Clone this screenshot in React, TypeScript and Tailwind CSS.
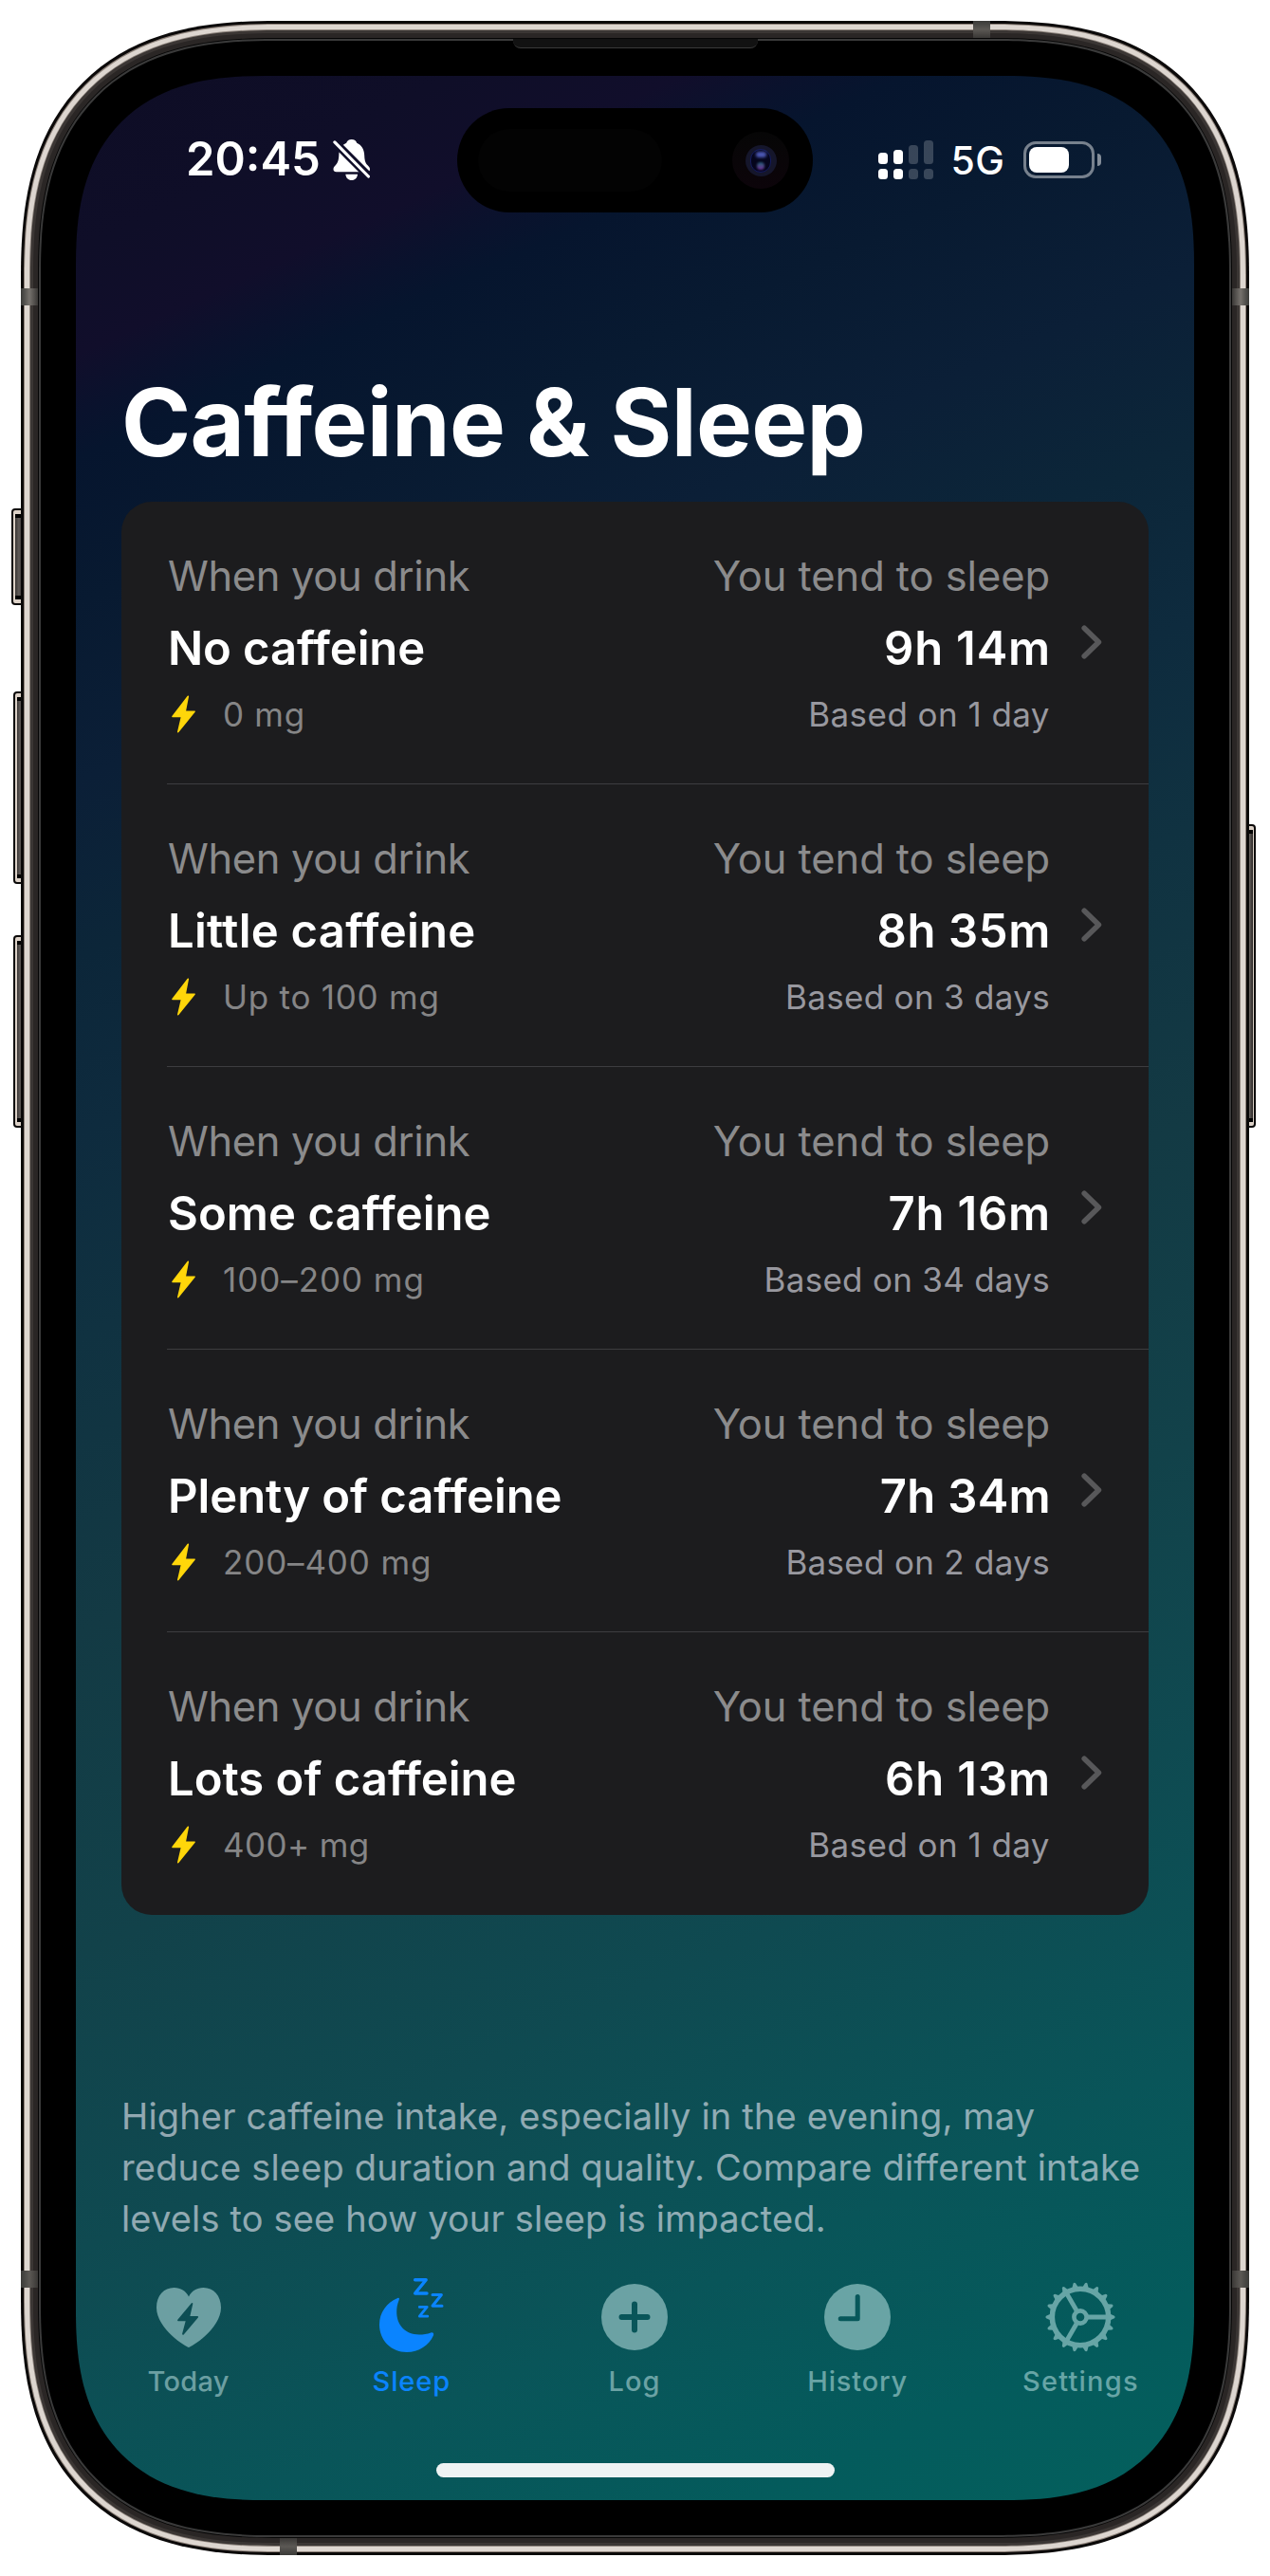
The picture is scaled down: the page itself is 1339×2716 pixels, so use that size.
import type { ReactNode } from "react";

const frameLayers = [
  "rounded-[270px] bg-[#0b0909] p-[3px]",
  "rounded-[267px] bg-[#8d827a] p-[1px]",
  "rounded-[266px] bg-[#ddd6d0] p-[5px]",
  "rounded-[260px] bg-[#8f867f] p-[1px]",
  "rounded-[258px] bg-[#3b3634] p-[3px]",
  "rounded-[255px] bg-[#2a2625] p-[5px]",
  "rounded-[249px] bg-[#050505] p-[1px]",
  "rounded-[247px] bg-[#3a3a3a] p-[2px]",
  "rounded-[245px] bg-black p-[37px]",
];

function Frame({ depth = 0, children }: { depth?: number; children: ReactNode }) {
  if (depth === frameLayers.length) return <>{children}</>;
  return (
    <div className={`h-full w-full [corner-shape:superellipse(1.326)] ${frameLayers[depth]}`}>
      <Frame depth={depth + 1}>{children}</Frame>
    </div>
  );
}

function SideButton({ place, side }: { place: string; side: "left" | "right" }) {
  const left = side === "left";
  return (
    <div
      className={`absolute bg-[#0b0909] py-[2px] ${left ? "rounded-l-[4px] pl-[2px]" : "rounded-r-[4px] pr-[2px]"} ${place}`}
    >
      <div
        className={`h-full w-full bg-[#ddd2c8] py-[4px] ${left ? "rounded-l-[2px] pl-[2px]" : "rounded-r-[2px] pr-[1px]"}`}
      >
        <div className="h-full w-full border-y-4 border-black bg-linear-to-r from-[#3a3634] via-[#625d5a] to-[#2a2625]" />
      </div>
    </div>
  );
}

function BellOff() {
  return (
    <svg className="h-[43px] w-[39px]" viewBox="0 0 39 43" fill="white">
      <mask id="bell-cut">
        <rect width="39" height="43" fill="white" />
        <path d="M-3 -2L43.2 44.2" stroke="black" strokeWidth="8.6" />
      </mask>
      <g mask="url(#bell-cut)">
        <path d="M19.7 0C22.8 0 24.6 1.6 25.2 3.8C30.3 6 33 10.5 33.2 17C33.4 23.5 34.8 25.5 37.3 28C38.6 29.4 39 30.3 39 31.4C39 33.2 37.8 34.2 36 34.2H3.6C1.8 34.2.5 33.2.5 31.4C.5 30 1 29.2 2.1 28C4.6 25.5 6 23 6.3 17C6.5 10.5 9.2 6 14.2 3.8C14.9 1.6 16.7 0 19.7 0Z" />
      </g>
      <path d="M13.3 36.7H26.1C25.6 40.5 23.3 43 19.7 43C16 43 13.8 40.5 13.3 36.7Z" />
      <path d="M1.9 2.9L37.4 39" stroke="white" strokeWidth="3.2" strokeLinecap="round" />
    </svg>
  );
}

function Signal() {
  return (
    <div className="flex h-[41px] items-end gap-[6px]">
      {[
        ["h-[12px]", "bg-white"],
        ["h-[15px]", "bg-white"],
        ["h-[20px]", "bg-white/20"],
        ["h-[25px]", "bg-white/20"],
      ].map(([height, tone]) => (
        <div key={height} className="flex w-[10px] flex-col gap-[5px]">
          <div className={`rounded-[3.5px] ${height} ${tone}`} />
          <div className={`h-[11px] rounded-[3.5px] ${tone}`} />
        </div>
      ))}
    </div>
  );
}

function Battery() {
  return (
    <div className="flex items-center gap-[3px]">
      <div className="h-[39px] w-[75px] rounded-[13px] border-[3px] border-white/45 p-[3px]">
        <div className="h-full w-[42px] rounded-[8px] bg-white" />
      </div>
      <div className="h-[13px] w-[4px] rounded-r-full bg-white/50" />
    </div>
  );
}

function StatusBar() {
  return (
    <div className="mt-[58px] flex h-[60px] items-center justify-between pr-[98px] pl-[116px]">
      <div className="flex items-center text-white">
        <div className="text-[49px] leading-[60px] font-semibold">20:45</div>
        <div className="ml-[13px]">
          <BellOff />
        </div>
      </div>
      <div className="flex items-center">
        <Signal />
        <div className="mr-[20px] ml-[19px] pt-[2px] text-[41px] leading-[50px] font-medium tracking-[0.2px] text-white">
          5G
        </div>
        <Battery />
      </div>
    </div>
  );
}

function DynamicIsland() {
  return (
    <div className="absolute top-[34px] left-[402px] flex h-[110px] w-[375px] items-center justify-between rounded-full bg-black pr-[25px] pl-[22px]">
      <div className="h-[66px] w-[194px] rounded-full bg-[#030303]" />
      <div className="flex h-[60px] w-[60px] items-center justify-center rounded-full bg-linear-to-b from-[#060606] to-[#0c040a]">
        <div className="flex h-[33px] w-[33px] items-center justify-center rounded-full bg-[#15162b]">
          <div className="flex h-[25px] w-[22px] flex-col items-center justify-between rounded-full border border-[#141b5c] bg-[#05051c] py-[2px]">
            <div className="h-[6px] w-[11px] rounded-full bg-[#4c58b4] blur-[1.5px]" />
            <div className="h-[8px] w-[8px] rounded-full bg-linear-to-b from-[#0c5a72] to-[#6a2a96] blur-[1px]" />
          </div>
        </div>
      </div>
    </div>
  );
}

function Bolt() {
  return (
    <svg className="h-[40px] w-[25px]" viewBox="0 0 25 40">
      <path
        d="M17.3 1.2L1 22.4H10.6L6.8 38.6L24 17.2H14.2Z"
        fill="#ffd60a"
        stroke="#ffd60a"
        strokeWidth="1.6"
        strokeLinejoin="round"
      />
    </svg>
  );
}

type Level = {
  name: string;
  nameTracking: string;
  amount: string;
  amountTracking: string;
  sleep: string;
  sleepTracking: string;
  basis: string;
  basisTracking: string;
};

const levels: Level[] = [
  {
    name: "No caffeine",
    nameTracking: "tracking-[-0.1px]",
    amount: "0 mg",
    amountTracking: "tracking-[0.7px]",
    sleep: "9h 14m",
    sleepTracking: "tracking-[0.8px]",
    basis: "Based on 1 day",
    basisTracking: "tracking-[0.45px]",
  },
  {
    name: "Little caffeine",
    nameTracking: "tracking-[0.25px]",
    amount: "Up to 100 mg",
    amountTracking: "tracking-[0.75px]",
    sleep: "8h 35m",
    sleepTracking: "tracking-[0.6px]",
    basis: "Based on 3 days",
    basisTracking: "tracking-[0.3px]",
  },
  {
    name: "Some caffeine",
    nameTracking: "tracking-[0.05px]",
    amount: "100–200 mg",
    amountTracking: "tracking-[0.95px]",
    sleep: "7h 16m",
    sleepTracking: "tracking-[0.8px]",
    basis: "Based on 34 days",
    basisTracking: "tracking-[0.28px]",
  },
  {
    name: "Plenty of caffeine",
    nameTracking: "tracking-[-0.08px]",
    amount: "200–400 mg",
    amountTracking: "tracking-[0.85px]",
    sleep: "7h 34m",
    sleepTracking: "tracking-[0.3px]",
    basis: "Based on 2 days",
    basisTracking: "tracking-[0.3px]",
  },
  {
    name: "Lots of caffeine",
    nameTracking: "tracking-[-0.02px]",
    amount: "400+ mg",
    amountTracking: "tracking-[0.4px]",
    sleep: "6h 13m",
    sleepTracking: "tracking-[0.9px]",
    basis: "Based on 1 day",
    basisTracking: "tracking-[0.45px]",
  },
];

function LevelRow({ level, last }: { level: Level; last: boolean }) {
  return (
    <div
      className={`ml-[48px] flex h-[298px] justify-between pt-[51px] pl-px ${last ? "" : "border-b border-[#3d3d40]"}`}
    >
      <div className="flex flex-col">
        <div className="text-[43.5px] leading-[54px] tracking-[-0.36px] text-[#8b8b8c]">When you drink</div>
        <div className={`mt-[20px] text-[49px] leading-[60px] font-semibold text-white ${level.nameTracking}`}>
          {level.name}
        </div>
        <div className="mt-[17px] flex h-[44px] items-center pl-[4px]">
          <Bolt />
          <div className={`ml-[29px] text-[35px] leading-[44px] text-[#858586] ${level.amountTracking}`}>
            {level.amount}
          </div>
        </div>
      </div>
      <div className="flex pr-[49px]">
        <div className="flex flex-col items-end">
          <div className="text-[43.5px] leading-[54px] tracking-[-0.1px] text-[#8b8b8c]">You tend to sleep</div>
          <div className={`mt-[20px] -mr-px text-[49px] leading-[60px] font-semibold text-white ${level.sleepTracking}`}>
            {level.sleep}
          </div>
          <div className={`mt-[17px] text-[35px] leading-[44px] text-[#98989f] ${level.basisTracking}`}>
            {level.basis}
          </div>
        </div>
        <svg className="mt-[79px] ml-[33px] h-[36px] w-[22px]" viewBox="0 0 22 36" fill="none">
          <path
            d="M3.2 3.2L18.4 18L3.2 32.8"
            stroke="#58585a"
            strokeWidth="5.6"
            strokeLinecap="round"
            strokeLinejoin="round"
          />
        </svg>
      </div>
    </div>
  );
}

function HeartIcon() {
  return (
    <svg className="h-[80px] w-[80px]" viewBox="0 0 80 80" fill="currentColor">
      <mask id="heart-cut">
        <rect width="80" height="80" fill="white" />
        <path
          d="M43.4 26L29 43.4H37.8L34 57.8L49.2 40H40.2Z"
          fill="black"
          stroke="black"
          strokeWidth="1.8"
          strokeLinejoin="round"
        />
      </mask>
      <path
        mask="url(#heart-cut)"
        d="M40 72C38 72 6 52.5 6 30C6 17.5 13.8 9 24.5 9C31.5 9 37 12.5 40 18.5C43 12.5 48.5 9 55.5 9C66.2 9 74 17.5 74 30C74 52.5 42 72 40 72Z"
      />
    </svg>
  );
}

function MoonIcon() {
  return (
    <svg className="h-[80px] w-[70px] overflow-visible" viewBox="0 0 70 80" fill="none">
      <path
        d="M20.2 19.9C8.8 24.5 1 35 1 48C1 64.5 13.5 77 29.8 77C42.5 77 53.5 69.5 58 59.2C58.8 57 57.3 55.8 55.3 56.4C51.5 57.8 47 58.4 43 58.4C28.5 58.4 19.2 48.5 19.2 34.5C19.2 30 20 26.2 21.4 22.8C22.3 20.6 22.2 19.2 20.2 19.9Z"
        fill="currentColor"
      />
      <g stroke="currentColor" strokeLinecap="round" strokeLinejoin="round">
        <path d="M38.6 0.7H50.2L38.6 15H51" strokeWidth="3.4" />
        <path d="M57 16.5H66.4L57 28.2H67" strokeWidth="3" />
        <path d="M43.3 29.4H51.2L43.3 39.2H51.8" strokeWidth="2.8" />
      </g>
    </svg>
  );
}

function PlusIcon() {
  return (
    <svg className="h-[80px] w-[80px]" viewBox="0 0 80 80">
      <mask id="plus-cut">
        <rect width="80" height="80" fill="white" />
        <path d="M26.5 40H53.5M40 26.5V53.5" stroke="black" strokeWidth="6" strokeLinecap="round" />
      </mask>
      <circle cx="40" cy="40" r="35" fill="currentColor" mask="url(#plus-cut)" />
    </svg>
  );
}

function ClockIcon() {
  return (
    <svg className="h-[80px] w-[80px]" viewBox="0 0 80 80" fill="none">
      <mask id="clock-cut">
        <rect width="80" height="80" fill="white" />
        <path
          d="M40.2 18.5V41.7H22.2"
          stroke="black"
          strokeWidth="5"
          strokeLinecap="round"
          strokeLinejoin="round"
        />
      </mask>
      <circle cx="40" cy="40" r="35" fill="currentColor" mask="url(#clock-cut)" />
    </svg>
  );
}

function GearIcon() {
  return (
    <svg className="h-[80px] w-[80px]" viewBox="0 0 80 80" fill="none" stroke="currentColor">
      <circle cx="40" cy="40" r="29.7" strokeWidth="5.6" />
      <circle cx="40" cy="40" r="6.6" strokeWidth="4.6" />
      {[0, 120, 240].map((a) => (
        <path key={a} d="M48 40H68" strokeWidth="4.8" transform={`rotate(${a} 40 40)`} />
      ))}
      {Array.from({ length: 18 }, (_, i) => (
        <path
          key={i}
          d="M71 36.6L76 38.7Q77.4 40 76 41.3L71 43.4Z"
          fill="currentColor"
          stroke="none"
          transform={`rotate(${i * 20} 40 40)`}
        />
      ))}
    </svg>
  );
}

const tabs = [
  { label: "Today", tone: "text-[#6c9fa2]", tracking: "tracking-[0.3px]", icon: <HeartIcon /> },
  { label: "Sleep", tone: "text-[#0a84ff]", tracking: "tracking-[0.9px]", icon: <MoonIcon /> },
  { label: "Log", tone: "text-[#6ba2a4]", tracking: "tracking-[1px]", icon: <PlusIcon /> },
  { label: "History", tone: "text-[#69a4a5]", tracking: "tracking-[0.85px]", icon: <ClockIcon /> },
  { label: "Settings", tone: "text-[#67a5a6]", tracking: "tracking-[1.2px]", icon: <GearIcon /> },
];

export default function App() {
  return (
    <div className="relative flex h-[2716px] w-[1339px] justify-center overflow-hidden bg-white py-[22px] font-['Inter',sans-serif]">
      <SideButton side="left" place="left-[12px] top-[536px] h-[102px] w-[12px]" />
      <SideButton side="left" place="left-[14px] top-[729px] h-[203px] w-[10px]" />
      <SideButton side="left" place="left-[14px] top-[986px] h-[203px] w-[10px]" />
      <SideButton side="right" place="left-[1314px] top-[869px] h-[320px] w-[10px]" />

      <div className="relative h-[2672px] w-[1295px]">
        <Frame>
          <div className="relative flex h-full w-full flex-col overflow-hidden rounded-[200px] bg-[linear-gradient(155.24deg,#0e0d25_0%,#0f0e28_6%,#110e2b_9.5%,#0a122d_11.5%,#06152e_13%,#081a31_18%,#0b1f37_24%,#0c2639_30%,#0e2b3e_36%,#103241_43%,#133a44_53%,#12424a_64%,#0f4a51_74%,#095559_85%,#045b5c_93%,#04605d_100%)] [corner-shape:superellipse(1.326)]">
            <StatusBar />
            <DynamicIsland />

            <h1 className="mt-[187px] ml-[48px] text-[99px] leading-[120px] font-bold tracking-[-0.68px] text-white">
              Caffeine &amp; Sleep
            </h1>

            <div className="mx-[48px] mt-[24px] rounded-[32px] bg-[#1c1c1e]">
              {levels.map((level, i) => (
                <LevelRow key={level.name} level={level} last={i === levels.length - 1} />
              ))}
            </div>

            <p className="mt-[185px] ml-[48px] text-[38px] leading-[54px] tracking-[0.16px] whitespace-nowrap text-[#ebebf5]/60">
              Higher caffeine intake, especially in the evening, may
              <br />
              reduce sleep duration and quality. Compare different intake
              <br />
              levels to see how your sleep is impacted.
            </p>

            <nav className="mt-[37px] mr-[2px] ml-[1px] grid grid-cols-5">
              {tabs.map((tab) => (
                <div key={tab.label} className={`flex flex-col items-center gap-[10px] ${tab.tone}`}>
                  {tab.icon}
                  <div className={`text-[29px] leading-[36px] font-medium ${tab.tracking}`}>{tab.label}</div>
                </div>
              ))}
            </nav>

            <div className="mx-auto mt-[68px] h-[15px] w-[420px] rounded-full bg-[#eef3f3]" />
          </div>
        </Frame>

        {/* Speaker grille */}
        <div className="absolute top-[19px] left-[519px] h-[10px] w-[258px] rounded-b-[8px] border-b border-[#3a3a3a] bg-[#121212]" />

        {/* Antenna bands */}
        <div className="absolute top-[282px] left-0 h-[18px] w-[18px] bg-linear-to-r from-[#3a3a38] via-[#76726d] to-[#3a3836]" />
        <div className="absolute top-[282px] right-0 h-[18px] w-[18px] bg-linear-to-l from-[#3a3a38] via-[#76726d] to-[#3a3836]" />
        <div className="absolute top-[2372px] left-0 h-[18px] w-[18px] bg-linear-to-r from-[#3a3a38] via-[#5c5955] to-[#3a3836]" />
        <div className="absolute top-[2372px] right-0 h-[18px] w-[18px] bg-linear-to-l from-[#3a3a38] via-[#5c5955] to-[#3a3836]" />
        <div className="absolute top-0 left-[1004px] h-[18px] w-[18px] bg-linear-to-b from-[#3a3a38] via-[#5c5955] to-[#3a3836]" />
        <div className="absolute bottom-0 left-[273px] h-[18px] w-[18px] bg-linear-to-t from-[#3a3a38] via-[#5c5955] to-[#3a3836]" />
      </div>
    </div>
  );
}
